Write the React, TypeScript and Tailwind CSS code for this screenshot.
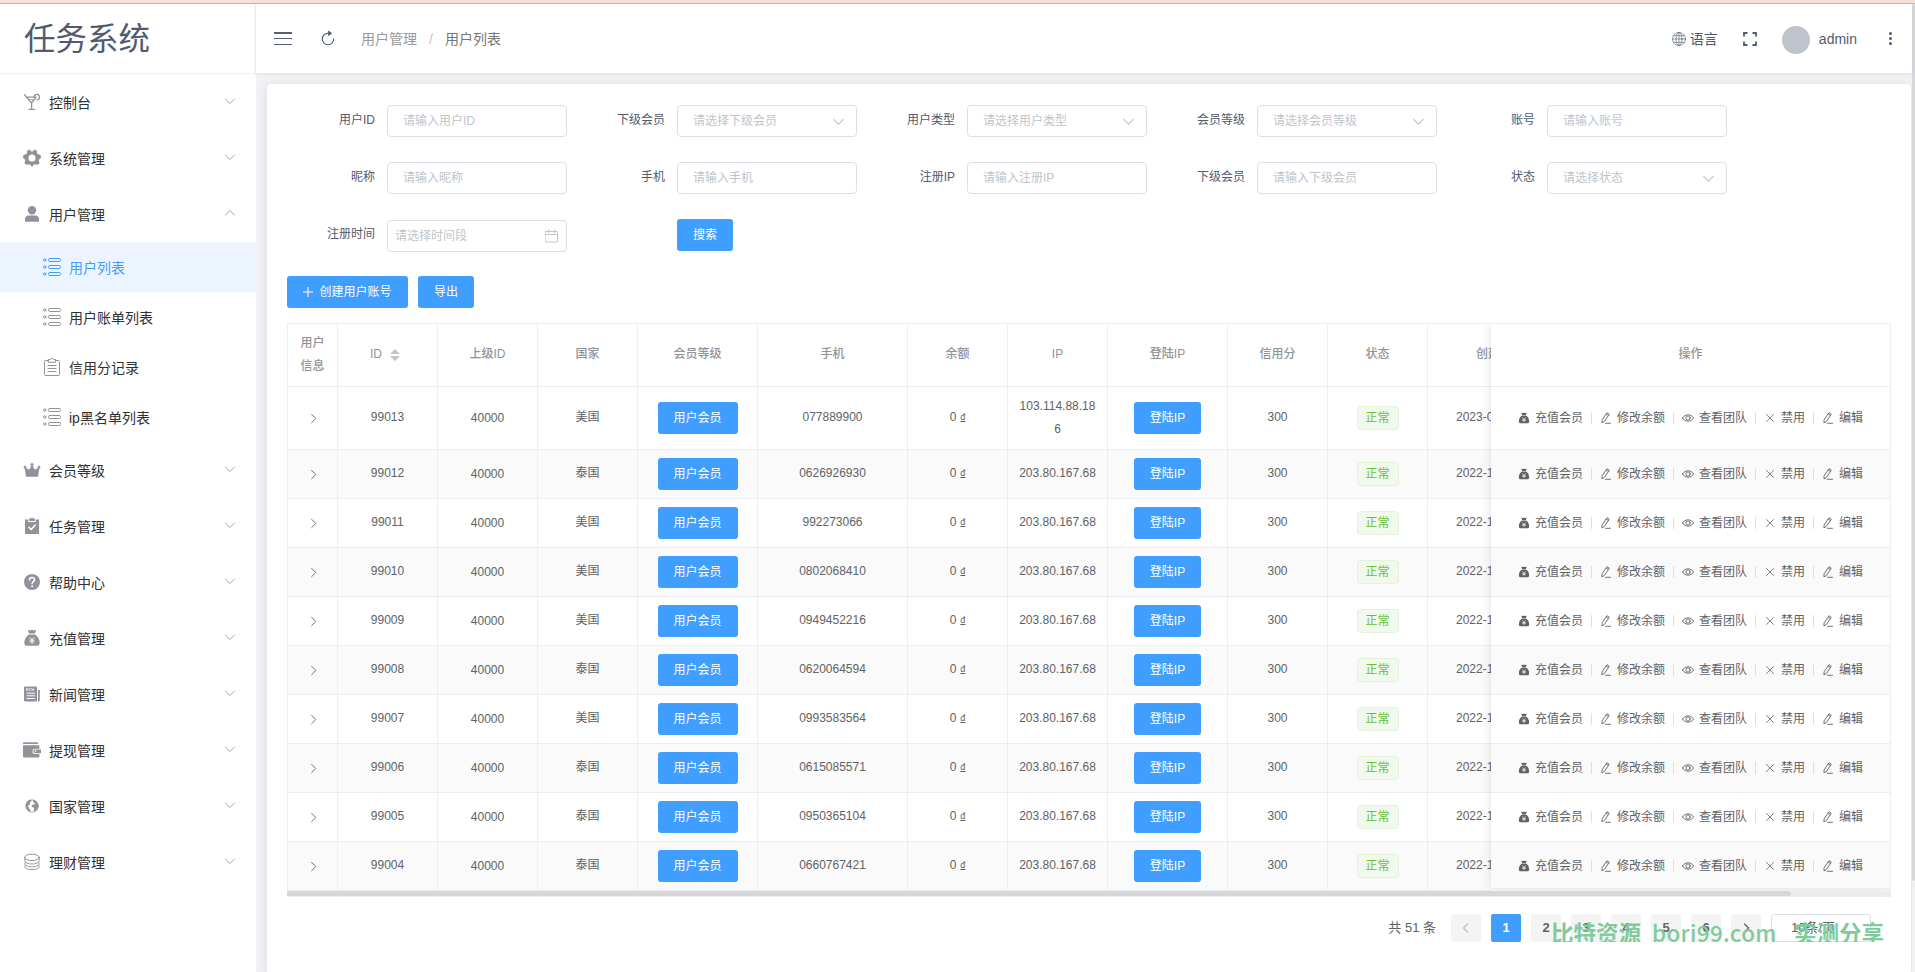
import React from "react";

type IconProps = { className?: string };
type SvgProps = IconProps & { children: React.ReactNode; box?: string };

const Svg = ({ className, children, box = "0 0 18 18" }: SvgProps) => (
  <svg viewBox={box} className={className} fill="none" stroke="currentColor" strokeWidth="1" strokeLinecap="round" strokeLinejoin="round">
    {children}
  </svg>
);

const Goblet = () => (
  <Svg className="h-[18px] w-[18px]">
    <path d="M3 4.200h9.800M1.500 1.700l7 8.300 4.600-5.800M8.600 10v6M6 16.400h5.400" strokeWidth="1.300" />
    <path d="M11 3.800a2.700 2.700 0 1 1 3 3" strokeWidth="1.300" />
    <path d="M5.600 6.600h6" strokeWidth=".8" />
  </Svg>
);
const Gear = () => (
  <Svg className="h-[18px] w-[18px]">
    <path
      fill="currentColor"
      stroke="none"
      fillRule="evenodd"
      d="M4.200 1.600 6.900.6 8 2.400h2L11.100.6l2.700 1 .1 2.300 1.200 1.400L17.500 6l.5 3-1.700 1.200-.5 1.800.9 2.100-2.300 2-2.100-.9-1.700.6L9.700 17.600H8.300L7.400 15.800 5.700 15.200 3.600 16.100 1.300 14.100 2.200 12 1.700 10.200 0 9 .5 6l2.400-.7L4.100 3.900zM9 5.600a3.500 3.500 0 1 0 0 7 3.500 3.500 0 0 0 0-7z"
    />
  </Svg>
);
const User = () => (
  <Svg className="h-[18px] w-[18px]">
    <g fill="currentColor" stroke="none">
      <circle cx="9" cy="5.200" r="4.200" />
      <path d="M2 16.800v-2.300a4 4 0 0 1 4-4h6a4 4 0 0 1 4 4v2.300z" />
    </g>
  </Svg>
);
const ListIcon = () => (
  <Svg className="h-[18px] w-[18px]">
    <circle cx="1.700" cy="2" r="1.200" />
    <circle cx="1.700" cy="9" r="1.200" />
    <circle cx="1.700" cy="16" r="1.200" />
    <rect x="5.500" y=".5" width="12" height="3" rx="1.200" />
    <rect x="5.500" y="7.500" width="12" height="3" rx="1.200" />
    <rect x="5.500" y="14.500" width="12" height="3" rx="1.200" />
  </Svg>
);
const Clipboard = () => (
  <Svg className="h-[18px] w-[18px]">
    <path d="M5.500 2.500H2.500a1 1 0 0 0-1 1v13a1 1 0 0 0 1 1h13a1 1 0 0 0 1-1v-13a1 1 0 0 0-1-1h-3" />
    <path d="M5.500 1.500h1.700C7.600.2 10.400.2 10.800 1.500h1.700v2.800h-7zM5 7.500h8M5 10.500h8M5 13.500h8" />
  </Svg>
);
const Crown = () => (
  <Svg className="h-[18px] w-[18px]">
    <path
      fill="currentColor"
      stroke="none"
      d="M3 15.700 1.700 7.600a1.400 1.400 0 1 1 1.400-.5l3 1.700L8.300 4.900a1.500 1.500 0 1 1 1.400 0l2.200 3.900 3-1.700a1.400 1.400 0 1 1 1.400.5L15 15.700z"
    />
  </Svg>
);
const TaskDone = () => (
  <Svg className="h-[18px] w-[18px]">
    <path fill="currentColor" stroke="none" d="M2 2.500h3.300V5h7.400V2.500H16V17H2z" />
    <path fill="currentColor" stroke="none" d="M6.200 1.600h1.400C8 .6 10 .6 10.400 1.600h1.400V4H6.200z" />
    <path d="m6 10.300 2.200 2.200L12.300 8" stroke="#fff" strokeWidth="1.600" />
  </Svg>
);
const Question = () => (
  <Svg className="h-[18px] w-[18px]">
    <circle cx="9" cy="9" r="8" fill="currentColor" stroke="none" />
    <path d="M6.500 6.900C6.600 3.700 11.600 3.900 11.500 6.900 11.400 8.700 9.200 8.600 9.100 10.500" stroke="#fff" strokeWidth="1.500" />
    <circle cx="9.100" cy="13.200" r="1" fill="#fff" stroke="none" />
  </Svg>
);
const MoneyBag = ({ className = "h-[18px] w-[18px]" }: IconProps) => (
  <Svg className={className}>
    <path fill="currentColor" stroke="none" d="M4.800 1.200c1.200-.6 1.800.8 2.600.2.700-.6 2.500-.6 3.200 0 .8.600 1.400-.8 2.600-.2L11.800 4.400H6.200zM6 5.400h6c2.800 1.800 4.600 4.800 4.700 8.300 0 2-1 3.100-2.800 3.100H4.100c-1.800 0-2.800-1.100-2.800-3.100C1.400 10.200 3.200 7.200 6 5.400z" />
    <path d="m6.900 8.500 2.100 2.500L11.100 8.500M9 11v3.500M6.900 11.200h4.200M6.900 12.900h4.200" stroke="#fff" strokeWidth=".9" />
  </Svg>
);
const News = () => (
  <Svg className="h-[18px] w-[18px]">
    <path fill="currentColor" stroke="none" d="M2 1.500h11a1 1 0 0 1 1 1V16.500H2.500a1.500 1.500 0 0 1-1.500-1.500V2.500a1 1 0 0 1 1-1zM15 5h1.800v10a1.500 1.500 0 0 1-1.800 1.500z" />
    <path d="M3.300 5.500V3.500l1.200 2v-2M7.400 3.500H6v2h1.400M8.700 3.500l.4 2 .6-1.500.6 1.500.4-2" stroke="#fff" strokeWidth=".6" />
    <path d="M4 8.200h7.500M4 10.800h7.500M4 13.500h7.500" stroke="#fff" />
  </Svg>
);
const Wallet = () => (
  <Svg className="h-[18px] w-[18px]">
    <path fill="currentColor" stroke="none" d="M1 1.300h13a1 1 0 0 1 1 1V3H0v-.7a1 1 0 0 1 1-1zM0 4.200h15.600a.8.8 0 0 1 .8.8v2.800h-4.300a2.600 2.600 0 0 0 0 5.200h4.300v2.600a1 1 0 0 1-1 1H1a1 1 0 0 1-1-1z" />
    <path fill="currentColor" stroke="none" d="M12.300 8.400H18V12.200h-5.700a1.900 1.900 0 0 1 0-3.800z" />
    <circle cx="12.600" cy="10.300" r=".8" fill="#fff" stroke="none" />
  </Svg>
);
const Earth = () => (
  <Svg className="h-[18px] w-[18px]">
    <circle cx="9" cy="9" r="6.200" strokeWidth=".7" />
    <path fill="currentColor" stroke="none" d="M7.600 2.700C4.500 3.300 2.500 5.800 2.700 9.300c.2 2.500 1.900 4.900 4.600 5.700.5-1 .2-2-.5-2.700-.9-.8-.6-1.400-1.400-2.200C4.600 9.200 5.200 8.400 6.200 8c1-.3 1.200-1 .8-1.900-.4-1 .8-1.300 1.400-1.900.5-.6-.1-1.300-.8-1.500z" />
    <path fill="currentColor" stroke="none" d="M10.500 2.800c-.5.900-1 1.300-.4 2.200.5.700 1.500.6 1.700 1.400.2.800-.7 1.200-1.500 1.200-1.100.1-2 .9-1.700 1.900.4 1 1.700.7 2.300 1.300.6.700-.1 1.600-.2 2.500 0 .7.200 1.200.7 1.400 2.700-1.100 4.200-3.300 4-6-.2-3-2.200-5.300-4.900-5.900z" />
  </Svg>
);
const Coins = () => (
  <Svg className="h-[18px] w-[18px]">
    <ellipse cx="9" cy="4.300" rx="7.200" ry="3.200" />
    <path d="M1.800 4.500v3.200C2 9.500 5 11 9 11s7-1.500 7.200-3.300V4.500M2.500 9.300c-1 .9-.9 2 .2 2.900 2.500 2.200 10.100 2.200 12.600 0 1.100-.9 1.200-2 .2-2.900M2.500 12.200c-1 .9-.9 2 .2 2.800 2.500 2.200 10.100 2.200 12.600 0 1.100-.8 1.200-1.900.2-2.800" />
  </Svg>
);
const Chevron = ({ className }: IconProps) => (
  <Svg box="0 0 12 12" className={className}>
    <path d="m1.500 4 4.500 4.500L10.500 4" />
  </Svg>
);
const Pencil = () => (
  <Svg box="0 0 12 12" className="h-3 w-3">
    <path d="M7.300.9 9.300 2.200 4.300 9.600 1.900 10.800 2.100 8.200zM6.400 2.200 8.500 3.500M5.500 11.300h5" strokeWidth=".9" />
  </Svg>
);
const Eye = () => (
  <Svg box="0 0 12 12" className="h-3 w-3">
    <path d="M.4 6C3 1.700 9 1.700 11.600 6 9 10.300 3 10.300.4 6z" strokeWidth=".9" />
    <circle cx="6" cy="6" r="2.100" strokeWidth=".9" />
  </Svg>
);
const Cross = () => (
  <Svg box="0 0 12 12" className="h-3 w-3">
    <path d="m2.500 2.500 7 7M9.500 2.500l-7 7" strokeWidth=".8" />
  </Svg>
);

type MenuItem = { label: string; icon: () => React.ReactElement; open?: boolean; children?: MenuItem[] };

const menu: MenuItem[] = [
  { label: "控制台", icon: Goblet },
  { label: "系统管理", icon: Gear },
  {
    label: "用户管理",
    icon: User,
    open: true,
    children: [
      { label: "用户列表", icon: ListIcon, open: true },
      { label: "用户账单列表", icon: ListIcon },
      { label: "信用分记录", icon: Clipboard },
      { label: "ip黑名单列表", icon: ListIcon },
    ],
  },
  { label: "会员等级", icon: Crown },
  { label: "任务管理", icon: TaskDone },
  { label: "帮助中心", icon: Question },
  { label: "充值管理", icon: MoneyBag },
  { label: "新闻管理", icon: News },
  { label: "提现管理", icon: Wallet },
  { label: "国家管理", icon: Earth },
  { label: "理财管理", icon: Coins },
];

const Sidebar = () => (
  <aside className="flex w-64 shrink-0 flex-col bg-white">
    <div className="flex h-[70px] items-center border-r border-b border-[#f0f1f4] pl-6 text-[31.5px] leading-[66px] text-[#515a6e]">任务系统</div>
    <nav className="flex flex-col">
      {menu.map((m) => (
        <React.Fragment key={m.label}>
          <div className="flex h-14 items-center pl-[23px] text-sm text-[#303133]">
            <span className="text-[#909399]">
              <m.icon />
            </span>
            <span className="ml-2 grow pt-[2px]">{m.label}</span>
            <Chevron className={m.open ? "mr-5 mb-[3px] h-3 w-3 rotate-180 text-[#a3a6ad]" : "mr-5 mb-[3px] h-3 w-3 text-[#a3a6ad]"} />
          </div>
          {m.children?.map((c) => (
            <div
              key={c.label}
              className={
                c.open
                  ? "flex h-[50px] items-center gap-2 bg-[#ecf5ff] pl-[43px] text-sm text-[#409eff]"
                  : "flex h-[50px] items-center gap-2 pl-[43px] text-sm text-[#303133]"
              }
            >
              <span className={c.open ? "text-[#409eff]" : "text-[#909399]"}>
                <c.icon />
              </span>
              <span className="pt-[2px]">{c.label}</span>
            </div>
          ))}
        </React.Fragment>
      ))}
    </nav>
  </aside>
);

const Header = () => (
  <header className="relative flex h-[69px] shrink-0 items-center bg-white pr-[14px] pl-[18px] text-sm text-[#515a6e] shadow-[0_1px_4px_rgba(0,21,41,.08)]">
    <div className="flex h-[13px] w-[18px] flex-col justify-between">
      <i className="h-[1.5px] bg-[#5a6072]" />
      <i className="h-[1.5px] bg-[#5a6072]" />
      <i className="h-[1.5px] bg-[#5a6072]" />
    </div>
    <Svg box="0 0 14 16" className="mr-[26px] mb-[2px] ml-[29px] h-4 w-[14px]">
      <path d="M8.500 3.300H7a5.700 5.700 0 1 0 5.700 5.700" strokeWidth="1.100" />
      <path d="m7.200.6 4 2.700-4 2.900z" fill="currentColor" stroke="none" />
    </Svg>
    <span className="text-[#999]">用户管理</span>
    <span className="mx-3 text-[#c0c4cc]">/</span>
    <span className="text-[#777]">用户列表</span>
    <div className="grow" />
    <Svg box="0 0 14 14" className="mr-1 h-[14px] w-[14px]">
      <g strokeWidth=".6">
        <circle cx="7" cy="7" r="6.500" />
        <ellipse cx="7" cy="7" rx="3" ry="6.500" />
        <path d="M7 .6v12.800M.6 7h12.800M1.500 3.700h11M1.500 10.300h11" />
      </g>
    </Svg>
    <span>语言</span>
    <Svg box="0 0 14 14" className="ml-[25px] h-[14px] w-[14px]">
      <path d="M1 4.500V1h3.500M9.500 1H13v3.500M13 9.500V13H9.500M4.500 13H1V9.500" strokeWidth="1.800" strokeLinecap="butt" strokeLinejoin="miter" />
    </Svg>
    <span className="mt-[2px] ml-[25px] h-7 w-7 rounded-full bg-[#c0c4cc]" />
    <span className="mr-8 ml-[9px]">admin</span>
    <div className="flex h-[13px] w-[9px] flex-col justify-between">
      <i className="h-[3px] w-[3px] rounded-full bg-[#515a6e]" />
      <i className="h-[3px] w-[3px] rounded-full bg-[#515a6e]" />
      <i className="h-[3px] w-[3px] rounded-full bg-[#515a6e]" />
    </div>
  </header>
);

type FieldDef = { label: string; placeholder: string; select?: boolean };
const fields: FieldDef[][] = [
  [
    { label: "用户ID", placeholder: "请输入用户ID" },
    { label: "下级会员", placeholder: "请选择下级会员", select: true },
    { label: "用户类型", placeholder: "请选择用户类型", select: true },
    { label: "会员等级", placeholder: "请选择会员等级", select: true },
    { label: "账号", placeholder: "请输入账号" },
  ],
  [
    { label: "昵称", placeholder: "请输入昵称" },
    { label: "手机", placeholder: "请输入手机" },
    { label: "注册IP", placeholder: "请输入注册IP" },
    { label: "下级会员", placeholder: "请输入下级会员" },
    { label: "状态", placeholder: "请选择状态", select: true },
  ],
];

const Label = ({ children }: { children: React.ReactNode }) => (
  <span className="mr-3 h-8 w-[88px] text-right leading-[31px] text-[#515a6e]">{children}</span>
);

const Field = ({ label, placeholder, select }: FieldDef) => (
  <div className="flex w-[290px]">
    <Label>{label}</Label>
    <div className="flex h-8 w-[180px] items-center justify-between rounded border border-[#dcdfe6] px-[15px] text-[#c0c4cc]">
      <span>{placeholder}</span>
      {select && <Chevron className="-mr-[4px] h-[13px] w-[13px]" />}
    </div>
  </div>
);

const SearchForm = () => (
  <div className="flex flex-col gap-[25px]">
    {fields.map((row, i) => (
      <div key={i} className="flex">
        {row.map((f) => (
          <Field key={f.label} {...f} />
        ))}
      </div>
    ))}
    <div className="flex h-8">
      <div className="flex w-[290px]">
        <Label>注册时间</Label>
        <div className="mt-px flex h-8 w-[180px] items-center justify-between rounded border border-[#dcdfe6] px-[7px] text-[#c0c4cc]">
          <span>请选择时间段</span>
          <Svg box="0 0 14 14" className="h-[14px] w-[14px]">
            <path d="M.5 2.500h12v10.500H.5zM.5 5.500h12M3.500.8v3M9.500.8v3" />
          </Svg>
        </div>
      </div>
      <button className="ml-[100px] h-8 w-14 rounded-[3px] bg-[#409eff] text-white">搜索</button>
    </div>
  </div>
);

type Row = { id: string; country: string; phone: string; ip: string; date: string };
const rows: Row[] = [
  { id: "99013", country: "美国", phone: "077889900", ip: "103.114.88.186", date: "2023-01-06" },
  { id: "99012", country: "泰国", phone: "0626926930", ip: "203.80.167.68", date: "2022-12-19" },
  { id: "99011", country: "美国", phone: "992273066", ip: "203.80.167.68", date: "2022-12-19" },
  { id: "99010", country: "美国", phone: "0802068410", ip: "203.80.167.68", date: "2022-12-19" },
  { id: "99009", country: "美国", phone: "0949452216", ip: "203.80.167.68", date: "2022-12-19" },
  { id: "99008", country: "泰国", phone: "0620064594", ip: "203.80.167.68", date: "2022-12-19" },
  { id: "99007", country: "美国", phone: "0993583564", ip: "203.80.167.68", date: "2022-12-19" },
  { id: "99006", country: "泰国", phone: "0615085571", ip: "203.80.167.68", date: "2022-12-19" },
  { id: "99005", country: "泰国", phone: "0950365104", ip: "203.80.167.68", date: "2022-12-19" },
  { id: "99004", country: "泰国", phone: "0660767421", ip: "203.80.167.68", date: "2022-12-19" },
];

const cell = "flex items-center justify-center border-r border-b border-[#ebeef5]";
const columns =
  "grid w-[1290px] grid-cols-[50px_100px_100px_100px_120px_150px_100px_100px_120px_100px_100px_150px]";

const rowHeight = (i: number) => (i === 0 ? "h-[63px]" : "h-[49px]");
const rowColor = (i: number) => (i % 2 ? "bg-[#fafafa]" : "bg-white");

const Actions = () => {
  const items: [React.ReactNode, string][] = [
    [<MoneyBag className="h-3 w-3" />, "充值会员"],
    [<Pencil />, "修改余额"],
    [<Eye />, "查看团队"],
    [<Cross />, "禁用"],
    [<Pencil />, "编辑"],
  ];
  return (
    <>
      {items.map(([icon, label], i) => (
        <React.Fragment key={label}>
          {i > 0 && <i className="mx-2 h-3 w-px bg-[#dcdfe6]" />}
          {icon}
          <span className="ml-[5px]">{label}</span>
        </React.Fragment>
      ))}
    </>
  );
};

const UserTable = () => (
  <div className="mt-[15px] w-[1604px]">
    <div className="flex h-[568px] overflow-hidden border-t border-l border-[#ebeef5] leading-[23px]">
      <div className="w-[1203px] overflow-hidden">
        <div className={`${columns} h-[63px] font-medium text-[#909399]`}>
          <div className={`${cell} px-[10px] text-center`}>用户信息</div>
          <div className={`${cell} gap-2 pr-[5px] pb-[2px]`}>
            ID
            <svg viewBox="0 0 10 12" className="mt-[2px] h-3 w-[10px] fill-[#c0c4cc]">
              <path d="M5 0l5 5H0zM0 7h10l-5 5z" />
            </svg>
          </div>
          {["上级ID", "国家", "会员等级", "手机", "余额", "IP", "登陆IP", "信用分", "状态"].map((t) => (
            <div key={t} className={`${cell} pb-[2px]`}>
              {t}
            </div>
          ))}
          <div className={`${cell} !justify-start pb-[2px] pl-[48px]`}>创建时间</div>
        </div>
        {rows.map((r, i) => (
          <div key={r.id} className={`${columns} ${rowHeight(i)} ${rowColor(i)} text-[#606266]`}>
            <div className={`${cell} pl-[2px]`}>
              <Chevron className="h-[11px] w-[11px] -rotate-90 text-[#666]" />
            </div>
            <div className={`${cell} pb-[2px]`}>{r.id}</div>
            <div className={cell}>40000</div>
            <div className={`${cell} pb-[2px]`}>{r.country}</div>
            <div className={cell}>
              <button className="h-8 w-20 rounded-[3px] bg-[#409eff] text-white">用户会员</button>
            </div>
            <div className={`${cell} pb-[2px]`}>{r.phone}</div>
            <div className={`${cell} gap-1 pb-[2px]`}>
              0<span className="text-[9px] underline">đ</span>
            </div>
            <div className={`${cell} px-[10px] pb-[1px] text-center break-all`}>{r.ip}</div>
            <div className={cell}>
              <button className="h-8 w-[67px] rounded-[3px] bg-[#409eff] text-white">登陆IP</button>
            </div>
            <div className={`${cell} pb-[2px]`}>300</div>
            <div className={cell}>
              <span className="flex h-6 w-[42px] items-center justify-center rounded border border-[#e1f3d8] bg-[#f0f9eb] text-[#67c23a]">正常</span>
            </div>
            <div className={`${cell} !justify-start pb-[2px] pl-[28px]`}>{r.date}</div>
          </div>
        ))}
      </div>
      <div className="h-[566px] w-[400px] overflow-hidden border-r border-b-2 border-[#ebeef5] bg-white shadow-[0_0_10px_rgba(0,0,0,.12)]">
        <div className="flex h-[63px] items-center justify-center border-b border-[#ebeef5] pb-[2px] font-medium text-[#909399]">操作</div>
        {rows.map((r, i) => (
          <div key={r.id} className={`flex items-center justify-center border-b border-[#ebeef5] text-[#606266] ${rowHeight(i)} ${rowColor(i)}`}>
            <Actions />
          </div>
        ))}
      </div>
    </div>
    <div className="h-[6px] bg-[#ebecee]">
      <div className="h-[5px] w-[1504px] rounded-r-[3px] bg-[#d5d7d9]" />
    </div>
  </div>
);

const pageButton = "flex h-7 w-[30px] items-center justify-center rounded-[2px] bg-[#f4f4f5] font-bold text-[#606266]";

const Pagination = () => (
  <div className="relative mt-[17px] mr-5 flex h-7 items-center justify-end gap-[10px] pr-5 text-[13px] text-[#606266]">
    <span className="mr-[5px]">共 51 条</span>
    <span className={pageButton}>
      <Svg box="0 0 12 12" className="h-3 w-3 text-[#c0c4cc]">
        <path d="M7.500 2 3.500 6l4 4" strokeWidth="1.500" />
      </Svg>
    </span>
    <span className="flex h-7 w-[30px] items-center justify-center rounded-[2px] bg-[#409eff] font-bold text-white">1</span>
    {["2", "3", "4", "5", "6"].map((p) => (
      <span key={p} className={pageButton}>
        {p}
      </span>
    ))}
    <span className={pageButton}>
      <Svg box="0 0 12 12" className="h-3 w-3">
        <path d="m4.500 2 4 4-4 4" strokeWidth="1.300" />
      </Svg>
    </span>
    <span className="flex h-7 w-[100px] items-center justify-center rounded-[3px] border border-[#dcdfe6] pr-[16px]">10条/页</span>
    <div className="absolute top-[8px] right-[4px] flex h-[20px] w-[336px] overflow-hidden font-['Noto_Sans_CJK_SC',sans-serif] text-[22.500px] leading-[21px] font-bold whitespace-nowrap text-[#80cb9c]">
      <span className="w-[101px]">比特资源</span>
      <span className="w-[142px] font-medium tracking-[.3px]">bori99.com</span>
      <span>实测分享</span>
    </div>
  </div>
);

export default function App() {
  return (
    <div className="flex h-[972px] w-[1915px] flex-col overflow-hidden bg-white font-['Liberation_Sans','Noto_Sans_CJK_SC',sans-serif]">
      <div className="h-1 shrink-0 border-b border-[#c9b2ae] bg-[#f7e0da]" />
      <div className="flex min-h-0 grow">
        <Sidebar />
        <div className="flex w-[1656px] flex-col bg-[#f0f2f5]">
          <Header />
          <main className="mt-[11px] mr-px ml-[11px] grow rounded-t bg-white px-5 pt-[21px] pr-0 text-xs shadow-[0_2px_12px_rgba(0,0,0,.1)]">
            <SearchForm />
            <div className="mt-[25px] flex gap-[10px]">
              <button className="flex h-8 w-[121px] items-center justify-center gap-[6px] rounded-[3px] bg-[#409eff] text-white">
                <Svg box="0 0 10 10" className="h-[10px] w-[10px]">
                  <path d="M5 0v10M0 5h10" />
                </Svg>
                创建用户账号
              </button>
              <button className="h-8 w-14 rounded-[3px] bg-[#409eff] text-white">导出</button>
            </div>
            <UserTable />
            <Pagination />
          </main>
        </div>
        <div className="w-[3px] bg-[#f1f1f2]">
          <div className="h-[877px] rounded-l-[3px] bg-[#d6d8da]" />
        </div>
      </div>
    </div>
  );
}
